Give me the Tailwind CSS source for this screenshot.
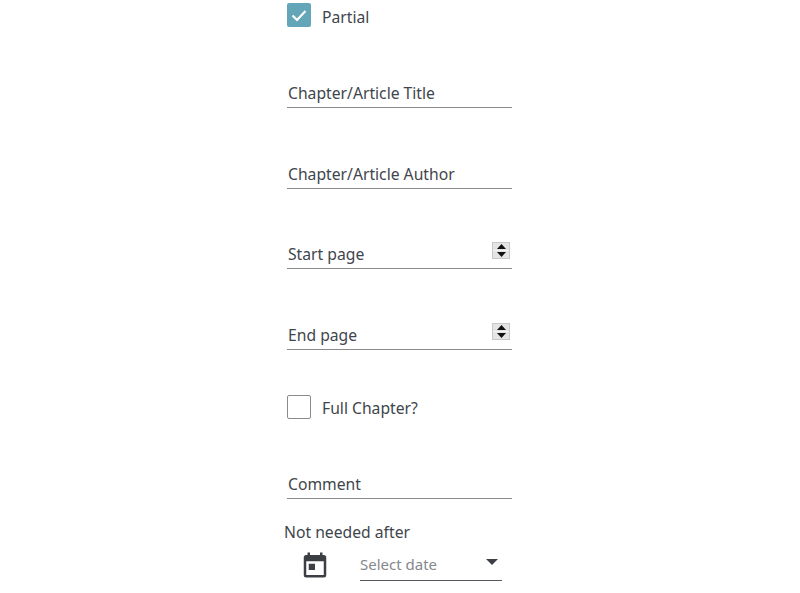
<!DOCTYPE html>
<html><head><meta charset="utf-8"><script src="https://cdn.jsdelivr.net/npm/@tailwindcss/browser@4"></script></head>
<body class="bg-white overflow-hidden">
<div class="w-[800px] h-[593px] overflow-hidden font-['Noto_Sans',sans-serif] text-[15.7px] leading-[20px] text-[#3f454d]">
<div class="w-[225px] ml-[287px] flex flex-col">
  <div class="flex items-center gap-[11px] h-[24px] mt-[3px]">
    <span class="w-[24px] h-[24px] rounded-[2px] bg-[#62a6b8] flex items-center justify-center">
      <svg width="16" height="13" viewBox="0 0 16 13" fill="none"><path d="M1.5 6.5L6 11L14.5 2" stroke="#fff" stroke-width="2.2"/></svg>
    </span>
    <span class="pt-[4px]">Partial</span>
  </div>
  <div class="mt-[53px] h-[28px] border-b border-[#8a8a8a] pl-[1px] pt-[3px]">Chapter/Article Title</div>
  <div class="mt-[53px] h-[28px] border-b border-[#8a8a8a] pl-[1px] pt-[3px]">Chapter/Article Author</div>
  <div class="mt-[53px] h-[27px] border-b border-[#8a8a8a] pl-[1px] pt-[2px] flex justify-between">
    <span>Start page</span>
    <span class="w-[18px] h-[17px] -mt-[2px] mr-[2px] bg-[#e4e4e4] border border-[#c8c8c8] flex flex-col items-center justify-center">
      <svg class="mb-[1px]" width="9" height="5" viewBox="0 0 9 5"><path d="M4.5 0L9 5H0Z" fill="#111"/></svg>
      <span class="w-full h-[1px] bg-[#f4f4f4]"></span>
      <svg class="mt-[1px]" width="9" height="5" viewBox="0 0 9 5"><path d="M4.5 5L9 0H0Z" fill="#111"/></svg>
    </span>
  </div>
  <div class="mt-[54px] h-[27px] border-b border-[#8a8a8a] pl-[1px] pt-[2px] flex justify-between">
    <span>End page</span>
    <span class="w-[18px] h-[17px] -mt-[2px] mr-[2px] bg-[#e4e4e4] border border-[#c8c8c8] flex flex-col items-center justify-center">
      <svg class="mb-[1px]" width="9" height="5" viewBox="0 0 9 5"><path d="M4.5 0L9 5H0Z" fill="#111"/></svg>
      <span class="w-full h-[1px] bg-[#f4f4f4]"></span>
      <svg class="mt-[1px]" width="9" height="5" viewBox="0 0 9 5"><path d="M4.5 5L9 0H0Z" fill="#111"/></svg>
    </span>
  </div>
  <div class="flex items-center gap-[11px] h-[24px] mt-[45px]">
    <span class="w-[24px] h-[24px] rounded-[2px] bg-white border border-[#8a8a8a]"></span>
    <span class="pt-[2px]">Full Chapter?</span>
  </div>
  <div class="mt-[53px] h-[27px] border-b border-[#8a8a8a] pl-[1px] pt-[2px]">Comment</div>
  <div class="mt-[23px] -ml-[3px] h-[20px]">Not needed after</div>
  <div class="flex mt-[4px]">
    <svg class="ml-[13px] mt-[4px]" width="30" height="30" viewBox="0 0 24 24"><path fill="#3c3f44" d="M19 4h-1V2h-2v2H8V2H6v2H5a2 2 0 0 0-2 2v14a2 2 0 0 0 2 2h14a2 2 0 0 0 2-2V6a2 2 0 0 0-2-2zm0 16H5V9h14v11zM7 11h5v5H7z"/></svg>
    <div class="ml-[30px] w-[142px] h-[35px] border-b border-[#55585c] flex justify-between pt-[8px] text-[#85888c] text-[15px]">
      <span>Select date</span>
      <svg class="mr-[4px] mt-[5px]" width="12" height="6" viewBox="0 0 12 6"><path d="M0 0H12L6 6Z" fill="#3c3f44"/></svg>
    </div>
  </div>
</div>
</div>
</body></html>
